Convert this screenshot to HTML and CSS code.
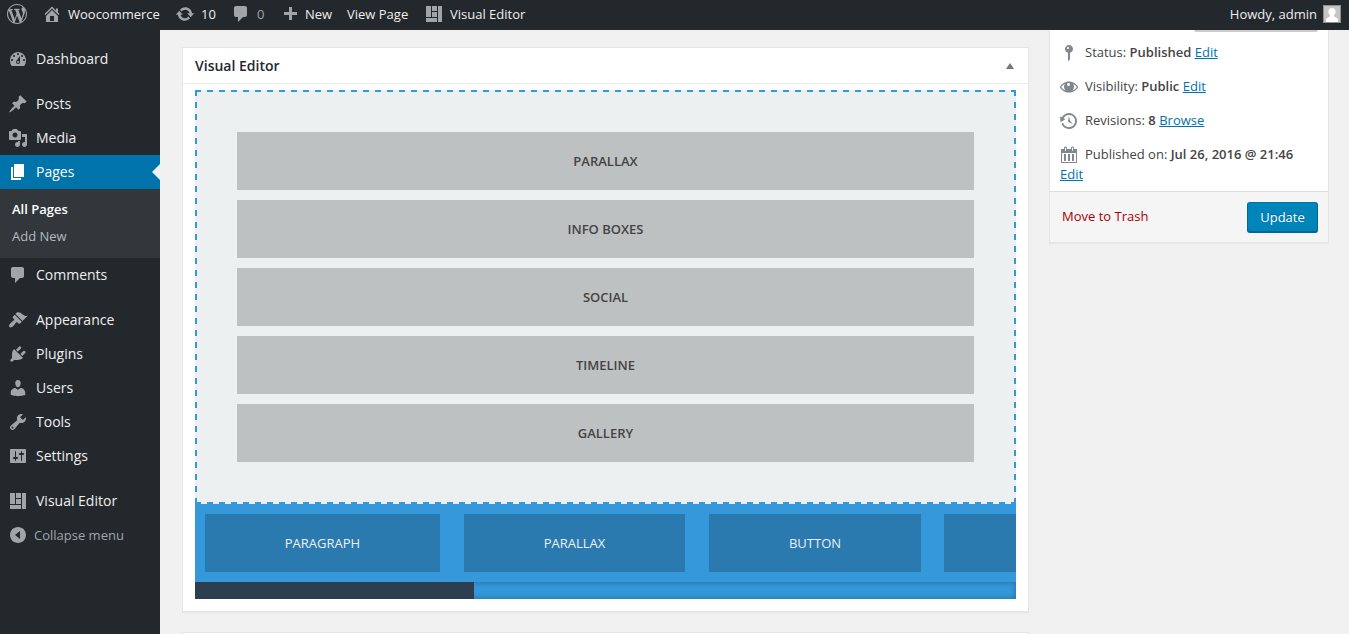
FILE: index.html
```html
<!DOCTYPE html>
<html lang="en">
<head>
<meta charset="utf-8">
<title>Edit Page</title>
<link rel="stylesheet" href="styles.css">
</head>
<body>
<header class="bar">
  <svg class="icon wp" viewBox="0 0 20 20"><path d="M20 10c0-5.51-4.49-10-10-10C4.48 0 0 4.49 0 10c0 5.52 4.48 10 10 10 5.51 0 10-4.48 10-10zM7.78 15.37L4.37 6.22c.55-.02 1.17-.08 1.17-.08.5-.06.44-1.13-.06-1.11 0 0-1.45.11-2.37.11-.18 0-.37 0-.58-.01C4.12 2.69 6.87 1.11 10 1.11c2.33 0 4.45.87 6.05 2.34-.68-.11-1.65.39-1.65 1.58 0 .74.45 1.36.9 2.1.35.61.55 1.36.55 2.46 0 1.49-1.4 5-1.4 5l-3.03-8.37c.54-.02.82-.17.82-.17.5-.05.44-1.25-.06-1.22 0 0-1.44.12-2.38.12-.87 0-2.33-.12-2.33-.12-.5-.03-.56 1.2-.06 1.22l.92.08 1.26 3.41zM17.41 10c.24-.64.74-1.87.43-4.25.7 1.29 1.05 2.71 1.05 4.25 0 3.29-1.73 6.24-4.4 7.78.97-2.59 1.94-5.2 2.92-7.78zM6.1 18.09C3.12 16.65 1.11 13.53 1.11 10c0-1.3.23-2.48.72-3.59C3.25 10.3 4.67 14.2 6.1 18.09zm4.03-6.63l2.58 6.98c-.86.29-1.76.45-2.71.45-.79 0-1.57-.11-2.29-.33.81-2.38 1.62-4.74 2.42-7.1z"/></svg>
  <a class="bar-item site"><svg class="icon" viewBox="0 0 20 20"><path fill-rule="evenodd" d="M16 8.5l1.53 1.53-1.06 1.06L10 4.6l-6.47 6.49-1.06-1.06L10 2.5l4 4v-2h2v4zm-6-2.46l6 5.99V18H4v-5.97zM12 17v-5H8v5h4z"/></svg>Woocommerce</a>
  <a class="bar-item updates"><svg class="icon" viewBox="0 0 20 20"><path d="M10.2 3.28c3.53 0 6.43 2.61 6.92 6h2.08l-3.5 4-3.5-4h2.32c-.45-1.97-2.21-3.45-4.32-3.45-1.45 0-2.73.71-3.54 1.78L4.95 5.66C6.23 4.2 8.11 3.28 10.2 3.28zm-.4 13.44c-3.52 0-6.43-2.61-6.92-6H.8l3.5-4c1.17 1.33 2.33 2.67 3.5 4H5.48c.45 1.97 2.21 3.45 4.32 3.45 1.45 0 2.73-.71 3.54-1.78l1.71 1.95c-1.28 1.46-3.15 2.38-5.25 2.38z"/></svg>10</a>
  <a class="bar-item comments"><svg class="icon" viewBox="0 0 20 20"><path d="M5 2h9c1.1 0 2 .9 2 2v7c0 1.1-.9 2-2 2h-2l-5 5v-5H5c-1.1 0-2-.9-2-2V4c0-1.1.9-2 2-2z"/></svg>0</a>
  <a class="bar-item new"><svg class="icon" viewBox="0 0 20 20"><path d="M17 8v3h-5v5H9v-5H4V8h5V3h3v5z"/></svg>New</a>
  <a class="bar-item view">View Page</a>
  <a class="bar-item ve"><svg class="icon" viewBox="0 0 20 20"><path d="M2 2h5v11H2V2zm6 0h5v5H8V2zm6 0h4v16h-4V2zM8 8h5v5H8V8zm-6 6h11v4H2v-4z"/></svg>Visual Editor</a>
  <div class="account">Howdy, admin<svg class="avatar" viewBox="0 0 18 18"><rect width="18" height="18" fill="#8c8f92"/><rect x="1" y="1" width="16" height="16" fill="#c5c5c5"/><path fill="#fff" d="M9 3c2.3 0 3.6 1.7 3.6 3.8 0 1.6-.8 3-1.8 3.7 0 1 .6 1.300 2 1.700C14.200 12.700 15 13.500 15 15v2H3v-2c0-1.500.8-2.300 2.200-2.800 1.400-.4 2-.7 2-1.700-1-.7-1.800-2.100-1.800-3.700C5.400 4.700 6.700 3 9 3z"/></svg></div>
</header>
<div class="page">
  <nav class="menu">
    <a class="menu-item"><svg class="icon" viewBox="0 0 20 20"><path fill-rule="evenodd" d="M3.76 17h12.48c1.1-1.53 1.76-3.4 1.76-5.44 0-4.72-3.58-8.56-8-8.56s-8 3.84-8 8.56c0 2.04.66 3.91 1.76 5.44zM10 4c.55 0 1 .45 1 1s-.45 1-1 1-1-.45-1-1 .45-1 1-1zM6 6c.55 0 1 .45 1 1s-.45 1-1 1-1-.45-1-1 .45-1 1-1zm8 0c.55 0 1 .45 1 1s-.45 1-1 1-1-.45-1-1 .45-1 1-1zm-5.370 5.550L12 7v6c0 1.100-.9 2-2 2s-2-.9-2-2c0-.57.24-1.080.63-1.450zM4 10c.55 0 1 .45 1 1s-.45 1-1 1-1-.45-1-1 .45-1 1-1zm12 0c.55 0 1 .45 1 1s-.45 1-1 1-1-.45-1-1 .45-1 1-1zm-5 3c0-.55-.45-1-1-1s-1 .45-1 1 .45 1 1 1 1-.45 1-1z"/></svg>Dashboard</a>
    <a class="menu-item spaced"><svg class="icon" viewBox="0 0 20 20"><path d="M10.440 3.020l1.820-1.820 6.360 6.350-1.830 1.820c-1.050-.68-2.480-.57-3.410.36l-.75.75c-.92.93-1.040 2.350-.35 3.410l-1.830 1.820-2.410-2.410-2.800 2.790c-.42.42-3.380 2.710-3.800 2.290s1.860-3.390 2.280-3.810l2.790-2.790L4.100 9.360l1.830-1.820c1.050.69 2.480.57 3.400-.36l.75-.75c.93-.92 1.050-2.350.36-3.410z"/></svg>Posts</a>
    <a class="menu-item"><svg class="icon" viewBox="0 0 20 20"><path fill-rule="evenodd" d="M13 11V4c0-.55-.45-1-1-1h-1.670L9 1H5L3.670 3H2c-.55 0-1 .45-1 1v7c0 .55.45 1 1 1h10c.55 0 1-.45 1-1zM7 4.500c1.380 0 2.500 1.120 2.500 2.500S8.380 9.500 7 9.500 4.500 8.380 4.500 7 5.620 4.500 7 4.500zM14 6h5v10.500c0 1.380-1.120 2.500-2.500 2.500S14 17.880 14 16.500s1.120-2.500 2.500-2.500c.17 0 .34.02.5.05V9h-3V6zm-4 8.050V13h2v3.500c0 1.380-1.120 2.500-2.500 2.500S7 17.880 7 16.500 8.120 14 9.500 14c.17 0 .34.02.5.05z"/></svg>Media</a>
    <a class="menu-item current"><svg class="icon" viewBox="0 0 20 20"><path d="M6 15V2h10v13H6zm-1 1h8v2H3V5h2v11z"/></svg>Pages</a>
    <div class="submenu"><a class="sub on">All Pages</a><a class="sub">Add New</a></div>
    <a class="menu-item"><svg class="icon" viewBox="0 0 20 20"><path d="M5 2h9c1.1 0 2 .9 2 2v7c0 1.1-.9 2-2 2h-2l-5 5v-5H5c-1.100 0-2-.9-2-2V4c0-1.100.9-2 2-2z"/></svg>Comments</a>
    <a class="menu-item spaced"><svg class="icon" viewBox="0 0 20 20"><path d="M14.480 11.060L7.410 3.990l1.500-1.500c.5-.56 2.300-.47 3.510.32 1.210.8 1.430 1.280 2.910 2.100 1.180.64 2.450 1.260 4.450.85zm-.71.71L6.700 4.700 4.930 6.470c-.39.39-.39 1.020 0 1.410l1.060 1.060c.39.39.39 1.030 0 1.420-.6.6-1.430 1.110-2.210 1.690-.35.26-.7.53-1.010.84C1.430 14.230.4 16.080 1.400 17.070c.99 1 2.840-.03 4.180-1.360.31-.31.58-.66.85-1.020.57-.78 1.080-1.610 1.690-2.210.39-.39 1.020-.39 1.410 0l1.060 1.060c.39.39 1.020.39 1.410 0z"/></svg>Appearance</a>
    <a class="menu-item"><svg class="icon" viewBox="0 0 20 20"><path d="M13.110 4.360L9.870 7.600 8 5.730l3.240-3.240c.35-.34 1.050-.2 1.560.32.52.51.66 1.210.31 1.550zm-8 1.770l.91-1.120 9.010 9.010-1.190.84c-.71.71-2.630 1.160-3.820 1.160H6.140L4.900 17.260c-.59.59-1.540.59-2.120 0-.59-.58-.59-1.530 0-2.120l1.240-1.240v-3.880c0-1.130.4-3.190 1.090-3.890zm7.260 3.970l3.240-3.240c.34-.35 1.040-.21 1.550.31.52.51.66 1.210.31 1.550l-3.240 3.250z"/></svg>Plugins</a>
    <a class="menu-item"><svg class="icon" viewBox="0 0 20 20"><path d="M10 9.250c-2.270 0-2.730-3.440-2.730-3.440C7 4.020 7.820 2 9.970 2c2.160 0 2.980 2.020 2.710 3.810 0 0-.41 3.440-2.680 3.440zm0 2.570L12.720 10c2.390 0 4.520 2.330 4.520 4.530v2.490s-3.650 1.130-7.240 1.130c-3.650 0-7.240-1.130-7.240-1.130v-2.490c0-2.250 1.940-4.480 4.470-4.480z"/></svg>Users</a>
    <a class="menu-item"><svg class="icon" viewBox="0 0 20 20"><path fill-rule="evenodd" d="M16.680 9.770c-1.340 1.340-3.300 1.670-4.950.99l-5.410 6.520c-.99.99-2.590.99-3.580 0s-.99-2.590 0-3.570l6.520-5.420c-.68-1.650-.35-3.610.99-4.950 1.280-1.280 3.120-1.620 4.720-1.060l-2.890 2.890 2.820 2.820 2.860-2.870c.53 1.580.18 3.390-1.080 4.650zM3.810 16.210c.4.39 1.040.39 1.430 0 .4-.4.4-1.040 0-1.430-.39-.4-1.030-.4-1.430 0-.39.39-.39 1.030 0 1.430z"/></svg>Tools</a>
    <a class="menu-item"><svg class="icon" viewBox="0 0 20 20"><path fill-rule="evenodd" d="M18 16V4c0-.55-.45-1-1-1H3c-.55 0-1 .45-1 1v12c0 .55.45 1 1 1h14c.55 0 1-.45 1-1zM8 11h1c.55 0 1 .45 1 1s-.45 1-1 1H8v1.500c0 .28-.22.5-.5.5s-.5-.22-.5-.5V13H6c-.55 0-1-.45-1-1s.45-1 1-1h1V5.500c0-.28.22-.5.5-.5s.5.22.5.5V11zm5-2h-1c-.55 0-1-.45-1-1s.45-1 1-1h1V5.500c0-.28.22-.5.5-.5s.5.22.5.5V7h1c.55 0 1 .45 1 1s-.45 1-1 1h-1v5.500c0 .28-.22.5-.5.5s-.5-.22-.5-.5V9z"/></svg>Settings</a>
    <a class="menu-item spaced"><svg class="icon" viewBox="0 0 20 20"><path d="M2 2h5v11H2V2zm6 0h5v5H8V2zm6 0h4v16h-4V2zM8 8h5v5H8V8zm-6 6h11v4H2v-4z"/></svg>Visual Editor</a>
    <a class="menu-item collapse"><svg class="icon" viewBox="0 0 20 20"><path fill-rule="evenodd" d="M10 2c4.420 0 8 3.580 8 8s-3.580 8-8 8-8-3.580-8-8 3.580-8 8-8zm2 12V6l-5 4z"/></svg>Collapse menu</a>
  </nav>
  <main class="main">
    <section class="box">
      <div class="box-head"><h2>Visual Editor</h2><svg class="toggle" viewBox="0 0 8 6"><path d="M0 6l4-6 4 6z"/></svg></div>
      <div class="editor">
        <div class="canvas">
          <div class="block">PARALLAX</div>
          <div class="block">INFO BOXES</div>
          <div class="block">SOCIAL</div>
          <div class="block">TIMELINE</div>
          <div class="block">GALLERY</div>
        </div>
        <div class="palette">
          <div class="tile t1">PARAGRAPH</div>
          <div class="tile t2">PARALLAX</div>
          <div class="tile t3">BUTTON</div>
          <div class="tile t4"></div>
        </div>
        <div class="track"><div class="thumb"></div></div>
      </div>
    </section>
    <section class="box next"></section>
  </main>
  <aside class="publish">
    <div class="preview"></div>
    <div class="row"><svg class="icon" viewBox="0 0 20 20"><path fill-rule="evenodd" d="M14 6c0 1.860-1.280 3.410-3 3.860V16c0 1-2 2-2 2V9.860c-1.720-.45-3-2-3-3.860 0-2.210 1.790-4 4-4s4 1.790 4 4zM8 5c0 .55.45 1 1 1s1-.45 1-1-.45-1-1-1-1 .45-1 1z"/></svg>Status: <b>Published</b> <a>Edit</a></div>
    <div class="row"><svg class="icon" viewBox="0 0 20 20"><path fill-rule="evenodd" d="M10 4.400C6 4.400 2.500 6.700.7 10c1.800 3.300 5.300 5.600 9.300 5.600s7.500-2.300 9.300-5.600C17.500 6.700 14 4.400 10 4.400zM5.900 6.900C5.300 7.700 5 8.700 5 9.700c0 1.600.7 3 1.900 4C4.900 13 3.300 11.700 2.200 10c.9-1.400 2.200-2.500 3.700-3.100zm8.200 0c1.500.6 2.800 1.700 3.700 3.100-1.100 1.700-2.700 3-4.700 3.700 1.200-1 1.900-2.400 1.900-4 0-1-.3-2-.9-2.800zM9.500 6c.9 0 1.500.7 1.500 1.500S10.300 9 9.500 9 8 8.300 8 7.500 8.600 6 9.500 6z"/></svg>Visibility: <b>Public</b> <a>Edit</a></div>
    <div class="row"><svg class="icon" viewBox="0 0 20 20"><path d="M13.650 2.880c3.930 2.010 5.480 6.840 3.470 10.770s-6.830 5.480-10.770 3.470c-1.870-.96-3.200-2.560-3.860-4.400l1.640-1.030c.45 1.570 1.520 2.950 3.080 3.760 3.010 1.540 6.690.35 8.230-2.660 1.550-3.010.36-6.690-2.650-8.240C9.780 3.010 6.100 4.200 4.560 7.210l1.880.97-4.950 3.080-.39-5.820 1.780.91C4.900 2.400 9.750.89 13.650 2.880zm-4.360 7.830C9.110 10.530 9 10.280 9 10c0-.07.03-.12.04-.19h-.01L10 5l.97 4.810L14 13l-4.500-2.120.02-.02c-.08-.04-.16-.09-.23-.15z"/></svg>Revisions: <b>8</b> <a>Browse</a></div>
    <div class="row last"><svg class="icon" viewBox="0 0 20 20"><path fill-rule="evenodd" d="M15 4h3v14H2V4h3V3c0-.83.67-1.500 1.500-1.500S8 2.170 8 3v1h4V3c0-.83.67-1.500 1.500-1.500S15 2.170 15 3v1zM6 3v2.500c0 .28.22.5.5.5s.5-.22.5-.5V3c0-.28-.22-.5-.5-.5S6 2.720 6 3zm7 0v2.500c0 .28.22.5.5.5s.5-.22.5-.5V3c0-.28-.22-.5-.5-.5s-.5.22-.5.5zm4 14V8H3v9h14zM7 16V9H5v7h2zm4 0V9H9v7h2zm4 0V9h-2v7h2z"/></svg>Published on: <b>Jul 26, 2016 @ 21:46</b> <a>Edit</a></div>
    <footer class="actions"><a class="trash">Move to Trash</a><button class="update">Update</button></footer>
  </aside>
</div>
</body>
</html>
```
FILE: styles.css
```css
* { box-sizing: border-box; }
html, body { margin: 0; height: 100%; overflow: hidden; }
body {
  display: flex;
  flex-direction: column;
  background: #f1f1f1;
  color: #444;
  font: 13px/20px "Open Sans", sans-serif;
}
.icon { width: 20px; height: 20px; fill: #a0a5aa; flex: none; }

/* top bar */
.bar {
  flex: none;
  display: flex;
  align-items: center;
  height: 30px;
  padding: 0 8px 2px 7px;
  background: #23282d;
  color: #eee;
}
.wp { margin-right: 15px; }
.bar-item { display: flex; align-items: center; white-space: nowrap; }
.bar-item .icon { margin-right: 6px; }
.site { width: 133px; }
.updates { width: 56px; }
.comments { width: 49px; color: #a0a5aa; }
.new { width: 67px; }
.new .icon { margin-right: 5px; }
.view { width: 77px; }
.account { display: flex; align-items: center; margin-left: auto; gap: 6px; }
.avatar { width: 18px; height: 18px; }

.page { flex: 1; min-height: 0; display: flex; align-items: flex-start; }

/* side menu */
.menu {
  width: 160px;
  height: 100%;
  flex: none;
  padding-top: 12px;
  background: #23282d;
}
.menu-item {
  position: relative;
  display: flex;
  align-items: center;
  height: 34px;
  padding-left: 8px;
  gap: 8px;
  color: #eee;
  font-size: 14px;
}
.spaced { margin-top: 11px; }
.current { background: #0073aa; color: #fff; }
.current .icon { fill: #fff; }
.current::after {
  content: "";
  position: absolute;
  right: 0;
  top: 9px;
  border: 8px solid transparent;
  border-left-width: 0;
  border-right-color: #f1f1f1;
}
.submenu { height: 69px; padding: 7px 12px; background: #32373c; }
.sub { display: block; height: 27px; line-height: 27px; color: #b4b9be; }
.on { color: #fff; font-weight: 600; }
.collapse { gap: 6px; font-size: 13px; color: #a0a5aa; }

/* editor column */
.main { width: 847px; margin: 17px 0 0 22px; flex: none; }
.box {
  height: 565px;
  background: #fff;
  border: 1px solid #e5e5e5;
  box-shadow: 0 1px 1px rgba(0, 0, 0, .04);
}
.next { height: 2px; margin-top: 20px; border-bottom: 0; box-shadow: none; }
.box-head {
  display: flex;
  align-items: center;
  justify-content: space-between;
  height: 36px;
  padding: 0 14px 0 12px;
  border-bottom: 1px solid #eee;
}
.box-head h2 { margin: 0; font-size: 14px; font-weight: 600; color: #23282d; }
.toggle { width: 8px; height: 6px; fill: #72777c; }
.editor { width: 821px; margin: 6px 0 0 12px; overflow: hidden; }
.canvas {
  --across: repeating-linear-gradient(90deg, #3498db 0 6px, transparent 6px 12px);
  --down: repeating-linear-gradient(180deg, #3498db 0 6px, transparent 6px 12px);
  display: flex;
  flex-direction: column;
  gap: 10px;
  height: 414px;
  padding: 42px;
  background:
    var(--across) left top / 100% 2px no-repeat,
    var(--across) left bottom / 100% 2px no-repeat,
    var(--down) left top / 2px 100% no-repeat,
    var(--down) right top / 2px 100% no-repeat,
    #ecf0f1;
}
.block, .tile {
  height: 58px;
  flex: none;
  display: flex;
  align-items: center;
  justify-content: center;
}
.block { background: #bdc1c2; font-weight: 600; }
.palette { display: flex; height: 78px; padding: 10px; background: #3498db; }
.tile { background: #2a7ab0; color: #ecf0f1; margin-right: 24px; }
.t1 { width: 235px; }
.t2 { width: 221px; }
.t3 { width: 212px; margin-right: 23px; }
.t4 { width: 72px; margin-right: 0; }
.track { height: 17px; background: #3498db; box-shadow: inset 0 0 6px rgba(0, 0, 0, .3); }
.thumb { width: 279px; height: 17px; background: #2c3e50; }

/* publish panel */
.publish {
  width: 280px;
  height: 213px;
  margin-left: 20px;
  background: #fff;
  border: 1px solid #e5e5e5;
  border-top: 0;
  box-shadow: 0 1px 1px rgba(0, 0, 0, .04);
}
.preview {
  width: 124px;
  height: 2px;
  margin-left: 144px;
  background: #ccc;
  border-radius: 0 0 2px 2px;
}
.row { height: 34px; padding: 10px 10px 0 10px; }
.row .icon { fill: #82878c; margin: 1px 6px -1px -1px; vertical-align: top; }
.row b { font-weight: 600; }
.row a { color: #0073aa; text-decoration: underline; }
.last { height: 57px; }
.actions {
  display: flex;
  align-items: center;
  justify-content: space-between;
  height: 51px;
  padding: 0 10px 0 12px;
  background: #f5f5f5;
  border-top: 1px solid #ddd;
}
.trash { color: #a00; margin-bottom: 2px; }
.update {
  width: 71px;
  height: 31px;
  padding: 0;
  border: 1px solid;
  border-color: #0073aa #006799 #006799;
  border-radius: 3px;
  background: #0085ba;
  box-shadow: inset 0 -1px 0 #006799;
  color: #fff;
  font: 13px "Open Sans", sans-serif;
  text-shadow: 0 -1px 1px #006799;
}
```
